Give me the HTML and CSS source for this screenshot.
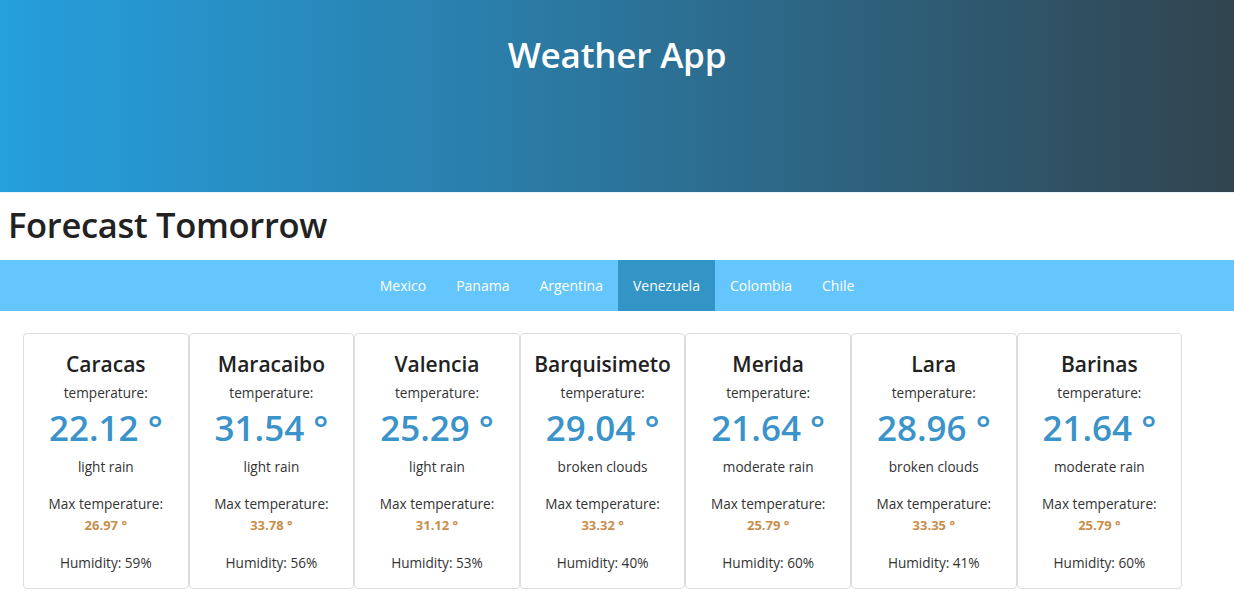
FILE: index.html
```html
<!DOCTYPE html>
<html>
<head>
<meta charset="utf-8">
<link rel="stylesheet" href="styles.css">
</head>
<body>
<header class="hero"><h1 class="hero-title">Weather App</h1></header>
<h2 class="section-title">Forecast Tomorrow</h2>
<nav class="tabs">
  <a class="tab">Mexico</a>
  <a class="tab">Panama</a>
  <a class="tab">Argentina</a>
  <a class="tab active">Venezuela</a>
  <a class="tab">Colombia</a>
  <a class="tab">Chile</a>
</nav>
<main class="cards">
  <div class="card"><h3 class="city">Caracas</h3><div class="label">temperature:</div><div class="temp">22.12 °</div><div class="desc">light rain</div><div class="label max-label">Max temperature:</div><div class="max">26.97 °</div><div class="hum">Humidity: 59%</div></div>
  <div class="card"><h3 class="city">Maracaibo</h3><div class="label">temperature:</div><div class="temp">31.54 °</div><div class="desc">light rain</div><div class="label max-label">Max temperature:</div><div class="max">33.78 °</div><div class="hum">Humidity: 56%</div></div>
  <div class="card"><h3 class="city">Valencia</h3><div class="label">temperature:</div><div class="temp">25.29 °</div><div class="desc">light rain</div><div class="label max-label">Max temperature:</div><div class="max">31.12 °</div><div class="hum">Humidity: 53%</div></div>
  <div class="card"><h3 class="city">Barquisimeto</h3><div class="label">temperature:</div><div class="temp">29.04 °</div><div class="desc">broken clouds</div><div class="label max-label">Max temperature:</div><div class="max">33.32 °</div><div class="hum">Humidity: 40%</div></div>
  <div class="card"><h3 class="city">Merida</h3><div class="label">temperature:</div><div class="temp">21.64 °</div><div class="desc">moderate rain</div><div class="label max-label">Max temperature:</div><div class="max">25.79 °</div><div class="hum">Humidity: 60%</div></div>
  <div class="card"><h3 class="city">Lara</h3><div class="label">temperature:</div><div class="temp">28.96 °</div><div class="desc">broken clouds</div><div class="label max-label">Max temperature:</div><div class="max">33.35 °</div><div class="hum">Humidity: 41%</div></div>
  <div class="card"><h3 class="city">Barinas</h3><div class="label">temperature:</div><div class="temp">21.64 °</div><div class="desc">moderate rain</div><div class="label max-label">Max temperature:</div><div class="max">25.79 °</div><div class="hum">Humidity: 60%</div></div>
</main>
</body>
</html>
```
FILE: styles.css
```css
* { box-sizing: border-box; }
body {
  margin: 0;
  font-family: "Open Sans", "Noto Sans", sans-serif;
  color: #212529;
  background: #fff;
}
.hero {
  height: 193px;
  background: linear-gradient(to right, #259fdd 0%, #2a7eaa 40%, #31444f 100%);
  border-bottom: 1px solid #e6f2f8;
  display: flex;
  justify-content: center;
}
.hero-title {
  margin: 33px 0 0;
  color: #fff;
  font-size: 35px;
  font-weight: 600;
  line-height: 44px;
  letter-spacing: -0.2px;
}
.section-title {
  margin: 0;
  padding: 10px 8px 0;
  height: 67px;
  font-size: 34.5px;
  font-weight: 600;
  line-height: 44px;
  letter-spacing: -0.3px;
  color: #222;
}
.tabs {
  height: 51px;
  background: #64c6fc;
  display: flex;
  justify-content: center;
}
.tab {
  padding: 0 15px;
  display: flex;
  align-items: center;
  color: #fff;
  font-size: 14px;
}
.tab.active { background: #3394c6; }
.cards {
  display: flex;
  padding: 22px 0 0 23px;
}
.card {
  width: 165.6px;
  height: 256px;
  border: 1px solid #ddd;
  border-radius: 4px;
  text-align: center;
  padding-top: 15px;
}
.city {
  margin: 0;
  font-size: 21px;
  font-weight: 600;
  line-height: 30px;
  color: #222;
}
.label {
  font-size: 13.6px;
  line-height: 18px;
  margin-top: 5px;
  color: #333;
}
.temp {
  font-size: 35px;
  font-weight: 600;
  line-height: 46px;
  color: #3a93c9;
  margin-top: 3px;
}
.desc {
  font-size: 13.6px;
  line-height: 18px;
  margin-top: 7px;
  color: #333;
}
.max-label { margin-top: 19px; }
.max {
  font-size: 13px;
  font-weight: 700;
  line-height: 18px;
  color: #c98e4b;
  margin-top: 3px;
}
.hum {
  font-size: 13.6px;
  line-height: 18px;
  margin-top: 20px;
  color: #333;
}
```
